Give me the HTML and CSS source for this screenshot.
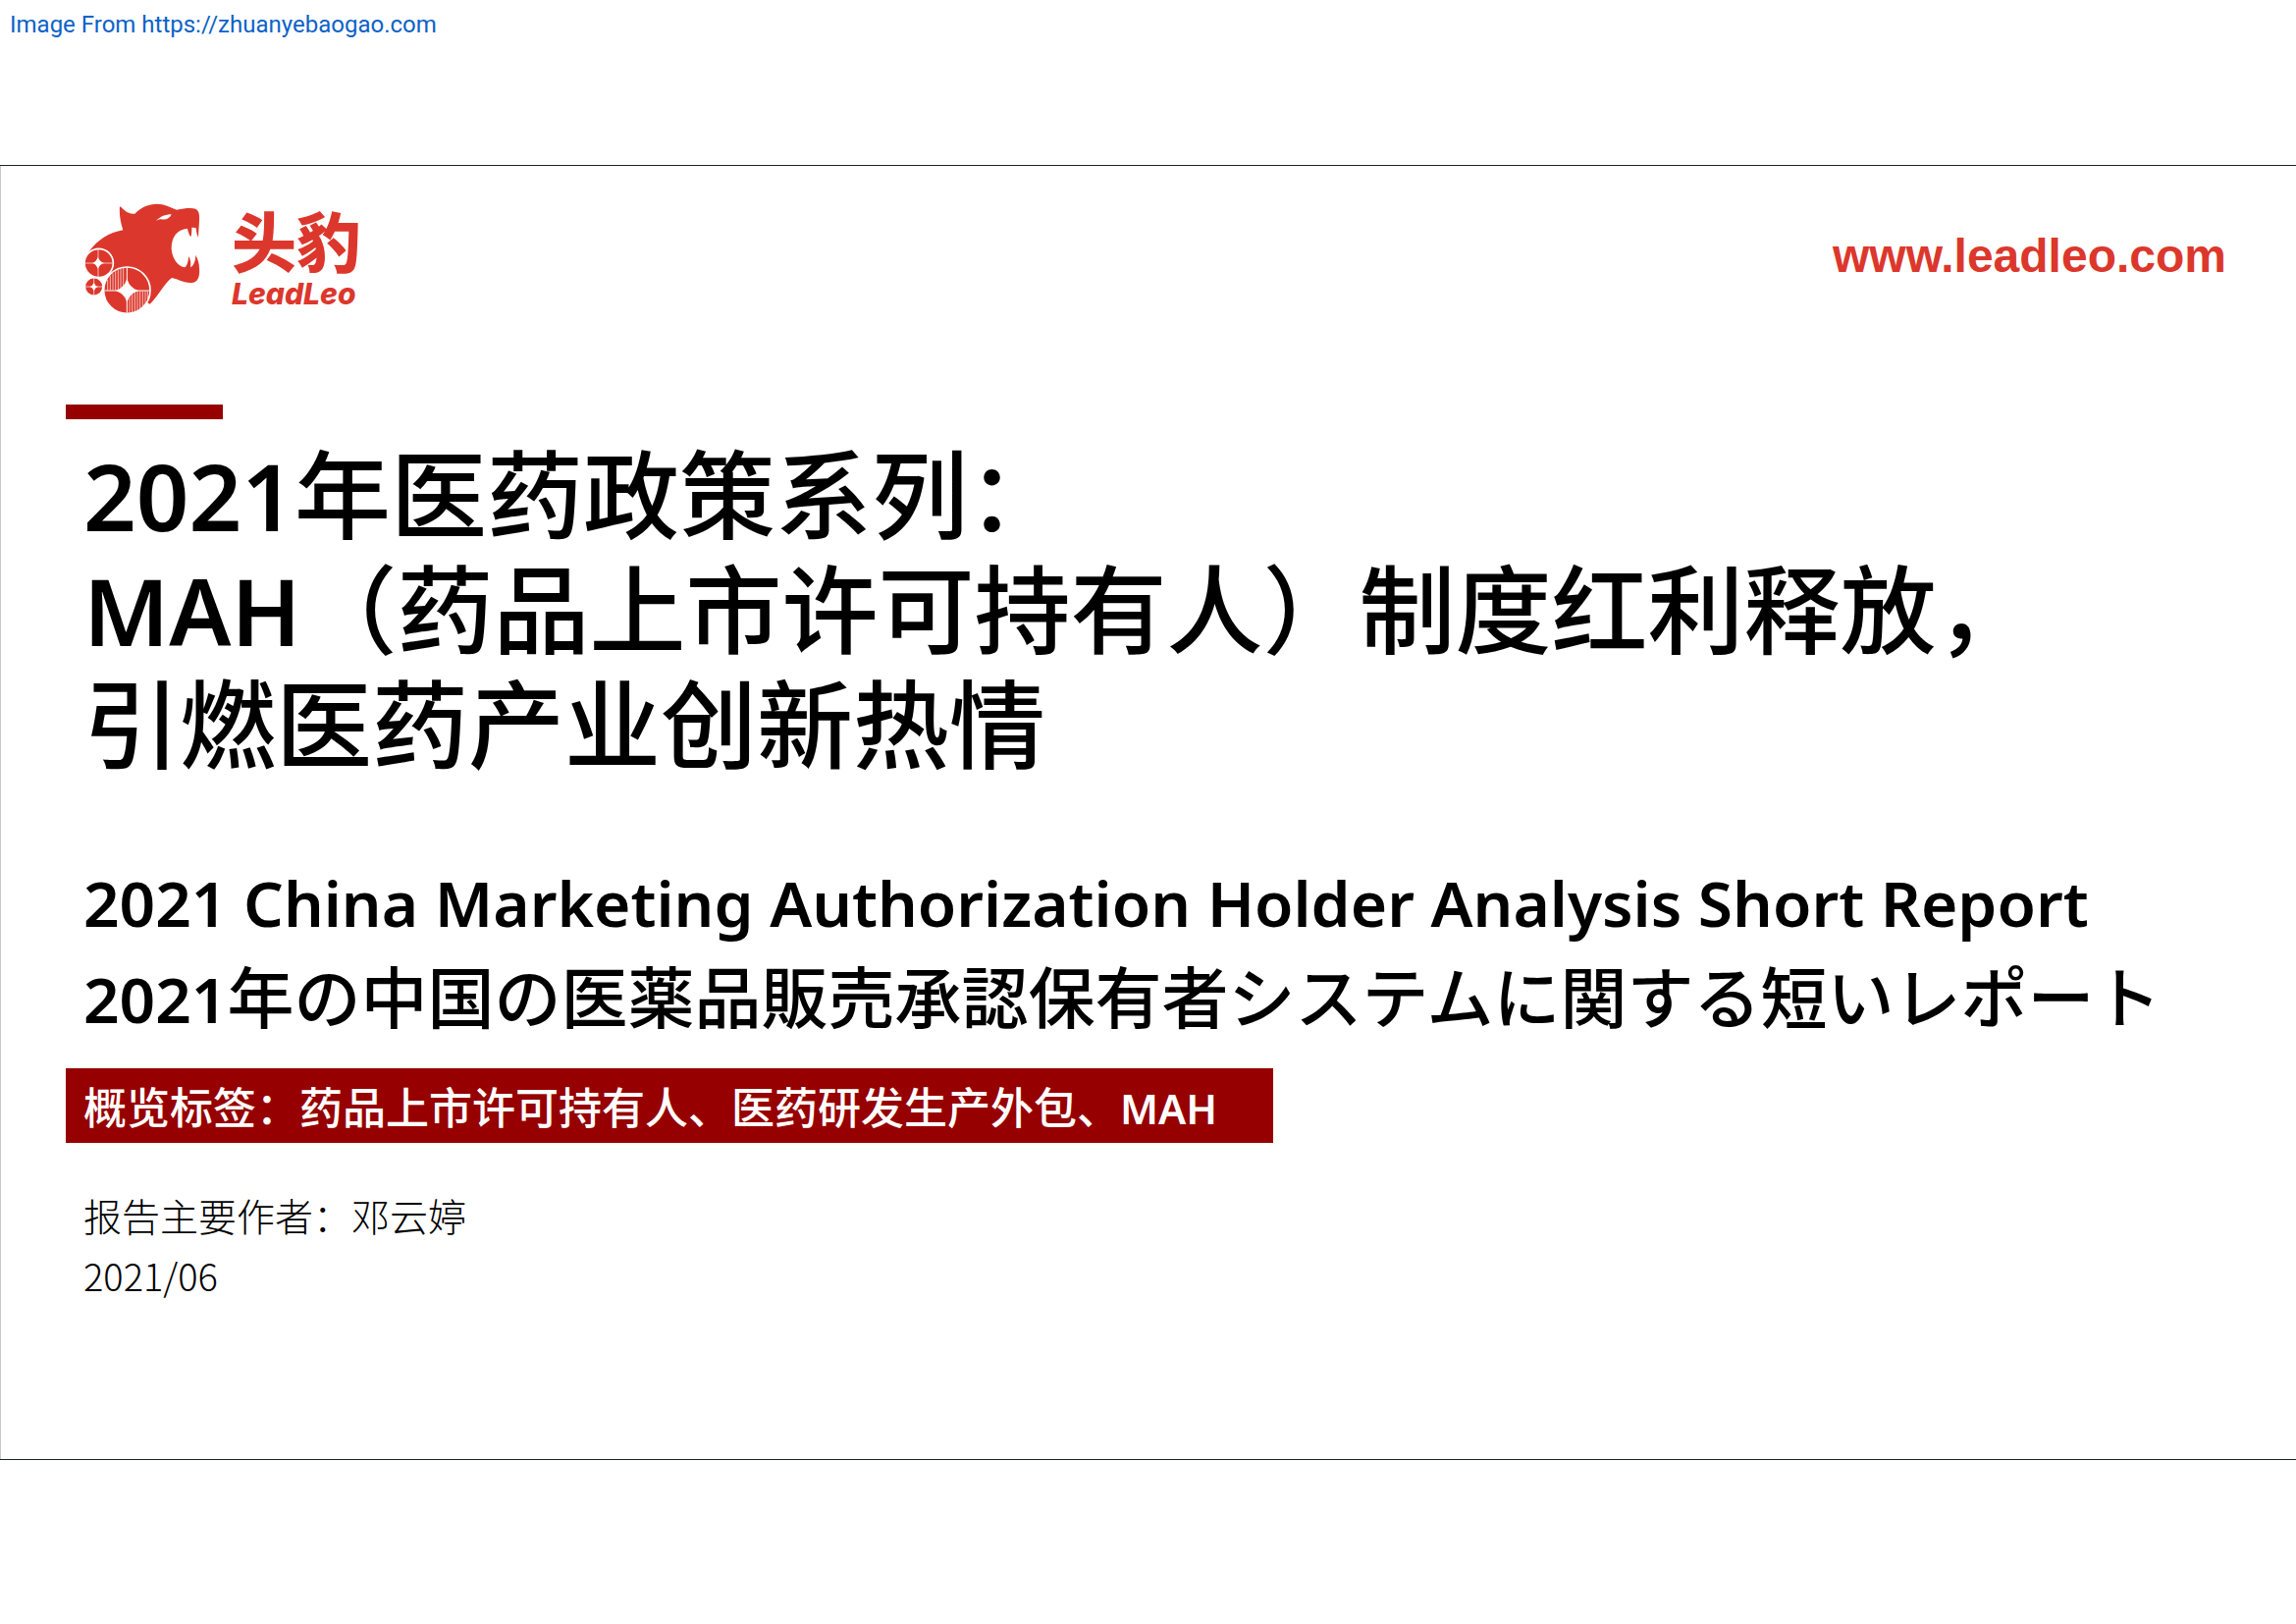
FILE: index.html
```html
<!DOCTYPE html>
<html lang="zh-CN">
<head>
<meta charset="utf-8">
<meta name="viewport" content="width=device-width, initial-scale=1">
<title>2021年医药政策系列</title>
<link rel="stylesheet" href="styles.css">
</head>
<body>
<p class="source"><a href="https://zhuanyebaogao.com">Image From https://zhuanyebaogao.com</a></p>
<main class="slide">
  <header class="masthead">
    <div class="brand">
      <svg class="brand-mark" viewBox="0 0 390 372" aria-hidden="true">
        <path fill="#dc372c" d="M126 28C140 36 146 52 172 50C190 30 215 20 240 20C262 20 280 30 300 38C325 33 345 32 358 35C368 40 370 52 369 70L366 122C362 116 360 106 359 94C354 92 350 92 346 92C346 104 346 112 343 121C337 112 334 102 333 95C300 98 284 122 284 156C285 186 304 212 325 214C333 208 336 192 336 180C343 190 344 202 342 214C352 208 358 194 358 176C364 188 369 200 369 216C372 246 362 262 344 261C320 262 300 248 285 246C262 262 246 300 218 326L148 284L30 168C58 130 92 108 136 100C128 76 124 50 126 28Z"/>
        <path fill="#fff" d="M237 72C250 58 266 52 284 52C280 64 268 70 252 67C247 67 242 69 237 72Z"/>
        <g fill="#dc372c" stroke="#fff" stroke-width="5">
          <circle cx="62" cy="201" r="44"/>
          <circle cx="47" cy="273" r="28"/>
          <circle cx="148" cy="284" r="71"/>
        </g>
        <g fill="#fff">
          <path d="M59 183Q65 197 78 201Q65 205 59 218Q54 205 43 201Q54 197 59 183Z"/>
          <path d="M47 261Q51 270 59 273Q51 276 47 286Q43 276 35 273Q43 270 47 261Z"/>
          <path d="M148 254Q155 276 178 285Q155 293 148 315Q141 293 118 285Q141 276 148 254Z" stroke="#fff" stroke-width="4"/>
        </g>
        <g stroke="#fff" stroke-width="2">
          <path d="M60 158V243M20 201H104M47 247V299M21 273H73"/>
          <path stroke-width="3" d="M148 215V353M80 285H217"/>
          <path d="M89 252V284M97 241V284M105 232V284M113 226V284M121 221V284M129 218V278M137 216V270M156 300V352M164 292V351M172 287V349M180 286V345M188 286V340M196 286V333M204 286V323M211 286V312"/>
        </g>
      </svg>
      <div class="brand-name">
        <span class="brand-cn">头豹</span>
        <span class="brand-en">LeadLeo</span>
      </div>
    </div>
    <a class="site" href="http://www.leadleo.com">www.leadleo.com</a>
  </header>
  <div class="rule"></div>
  <h1 class="title"><span class="latin">2021</span>年医药政策系列：<br><span class="latin">MAH</span>（药品上市许可持有人）制度红利释放，<br>引燃医药产业创新热情</h1>
  <p class="subtitle" lang="en"><span class="latin">2021 China Marketing Authorization Holder Analysis Short Report</span></p>
  <p class="subtitle subtitle-ja" lang="ja"><span class="latin">2021</span>年の中国の医薬品販売承認保有者システムに関する短いレポート</p>
  <p class="tags">概览标签：药品上市许可持有人、医药研发生产外包、<span class="latin">MAH</span></p>
  <p class="byline">报告主要作者：邓云婷</p>
  <p class="byline byline-date">2021/06</p>
</main>
</body>
</html>
```

FILE: styles.css
```css
* { box-sizing: border-box; }

body {
  margin: 0;
  background: #fff;
  color: #000;
  font-family: "Noto Sans CJK SC", sans-serif;
}

p, h1 { margin: 0; }
a { text-decoration: none; }

.latin { font-family: "Noto Sans", sans-serif; font-weight: 600; line-height: 1; }

.source {
  padding: 9px 10px;
  height: 168px;
  font: 24px/32px Roboto, sans-serif;
}
.source a { color: #0b62c8; }

.slide {
  border: 1px solid #1b2127;
  border-width: 1px 0;
  box-shadow: inset 1px 0 #c8c8c8;
  padding: 32px 67px 156px;
}

.masthead {
  display: flex;
  justify-content: space-between;
  align-items: flex-start;
  padding: 0 4px 0 13px;
}
.brand { display: flex; gap: 26px; color: #dc372c; }
.brand-mark { width: 130px; height: 124px; }
.brand-name { display: flex; flex-direction: column; padding-top: 4px; }
.brand-cn { font-size: 66px; line-height: 76px; font-weight: 900; }
.brand-en { font: italic 800 30px/36px Inter, sans-serif; }

.site {
  padding-top: 32px;
  color: #dc372c;
  font: bold 48px/56px "Liberation Sans", sans-serif;
}

.rule { width: 160px; height: 15px; margin-top: 87px; background: #960000; }

.title {
  margin: 13px 0 0 18px;
  font-size: 98px;
  line-height: 117px;
  font-weight: 500;
}
.title .latin { font-size: 94px; }

.subtitle {
  margin: 75px 0 0 18px;
  font: 500 68px/98px "Noto Sans CJK JP", sans-serif;
  white-space: nowrap;
}
.subtitle .latin { font-size: 64px; }
.subtitle-ja { margin-top: 0; }

.tags {
  width: 1230px;
  margin: 26px 0 42px;
  padding: 0 18px;
  background: #960000;
  color: #fff;
  font-size: 44px;
  line-height: 76px;
  font-weight: 500;
  white-space: nowrap;
}
.tags .latin { font-size: 42px; }

.byline {
  margin-left: 18px;
  font-size: 39px;
  line-height: 62px;
  font-weight: 300;
}
.byline-date { font-size: 38px; }
```
